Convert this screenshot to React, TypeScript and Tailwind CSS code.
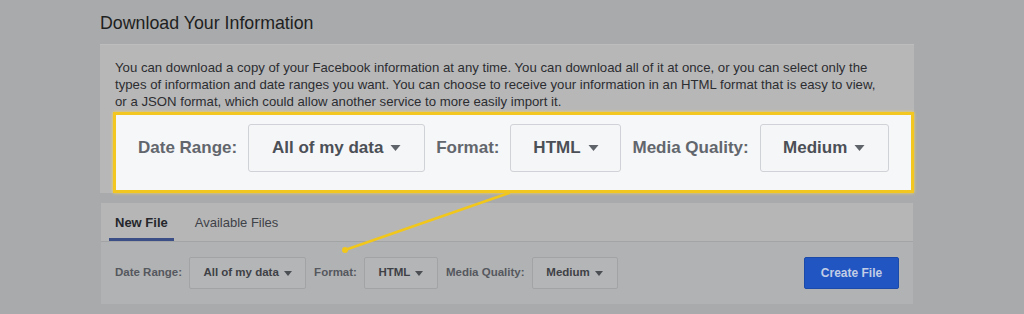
import React from 'react';

const Caret = ({ className }: { className: string }) => (
  <svg viewBox="0 0 10 6" className={className} fill="currentColor">
    <path d="M0 0h10L5 6z" />
  </svg>
);

function BigSelect({ label, width }: { label: string; width: string }) {
  return (
    <div
      className={`${width} h-[48px] flex items-center justify-center gap-[7px] border border-[#cfd2d6] rounded-[3px] bg-[#f5f6f7] text-[17px] font-bold text-[#4b4f56]`}
    >
      <span>{label}</span>
      <Caret className="w-[11px] h-[6px] text-[#5f636a]" />
    </div>
  );
}

function SmallSelect({ label, width }: { label: string; width: string }) {
  return (
    <div
      className={`${width} h-[32px] flex items-center justify-center gap-[5px] border border-[#a2a3a5] rounded-[2px] bg-[#b4b5b6] text-[11.5px] font-bold text-[#3e4146]`}
    >
      <span>{label}</span>
      <Caret className="w-[8px] h-[5px] text-[#4b4e53]" />
    </div>
  );
}

export default function App() {
  return (
    <div
      className="relative w-[1024px] h-[314px] overflow-hidden bg-[#a9aaac] pl-[100px] pt-[12px]"
      style={{ fontFamily: '"Liberation Sans", Arial, sans-serif' }}
    >
      <h1 className="text-[17.8px] leading-[22px] text-[#1e1f21]">Download Your Information</h1>

      <div className="mt-[10px] w-[814px] bg-[#b7b7b8] pt-[14px] border-t border-[#bdbdbe]">
        <p className="pl-[15px] pr-[28px] text-[13.2px] leading-[17px] text-[#2c2d30]">
          You can download a copy of your Facebook information at any time. You can download all of it at once, or you can select only the types of information and date ranges you want. You can choose to receive your information in an HTML format that is easy to view,{' '}
          <br />
          or a JSON format, which could allow another service to more easily import it.
        </p>

        <div className="relative ml-[13px] mt-[2px] -mb-[8px] h-[81px] border-[3px] border-[#f3c720] bg-[#f6f7f8] shadow-[0_0_3px_#f6d75a] flex items-start pt-[9px] pl-[22px] gap-[11px]">
          <span className="h-[48px] flex items-center text-[17px] font-bold text-[#62666d]">Date Range:</span>
          <BigSelect label="All of my data" width="w-[177px]" />
          <span className="h-[48px] flex items-center text-[17px] font-bold text-[#62666d]">Format:</span>
          <BigSelect label="HTML" width="w-[111px]" />
          <span className="h-[48px] flex items-center text-[17px] font-bold text-[#62666d]">Media Quality:</span>
          <BigSelect label="Medium" width="w-[129px]" />
        </div>
      </div>

      <div className="mt-[17px] w-[814px] border border-[#a9aaab] bg-[#b1b2b3]">
        <div className="h-[39px] bg-[#b6b6b7] border-b border-[#a3a4a6] flex items-end pl-[8px] gap-[21px]">
          <div className="flex flex-col items-center">
            <span className="px-[6px] text-[13px] font-bold text-[#25272b] leading-[16px]">New File</span>
            <div className="mt-[7px] h-[3px] w-full bg-[#3b4f86]" />
          </div>
          <span className="pb-[10px] text-[13px] text-[#3f4247] leading-[16px]">Available Files</span>
        </div>
        <div className="h-[62px] flex items-center pl-[14px] pr-[14px]">
          <span className="text-[11.5px] font-bold text-[#55585e]">Date Range:</span>
          <div className="ml-[7px]"><SmallSelect label="All of my data" width="w-[117px]" /></div>
          <span className="ml-[8px] text-[11.5px] font-bold text-[#55585e]">Format:</span>
          <div className="ml-[7px]"><SmallSelect label="HTML" width="w-[74px]" /></div>
          <span className="ml-[8px] text-[11.5px] font-bold text-[#55585e]">Media Quality:</span>
          <div className="ml-[7px]"><SmallSelect label="Medium" width="w-[86px]" /></div>
          <button className="ml-auto w-[95px] h-[32px] rounded-[2px] bg-[#2156c2] border border-[#1c4aa8] text-[12px] font-bold text-[#c2cde6]">
            Create File
          </button>
        </div>
      </div>

      <svg className="absolute left-0 top-0 pointer-events-none" width="1024" height="314">
        <line x1="509" y1="193" x2="345" y2="250" stroke="#f1c71c" strokeWidth="2.5" strokeLinecap="round" />
        <circle cx="345" cy="250" r="3" fill="#f1c71c" />
      </svg>
    </div>
  );
}
